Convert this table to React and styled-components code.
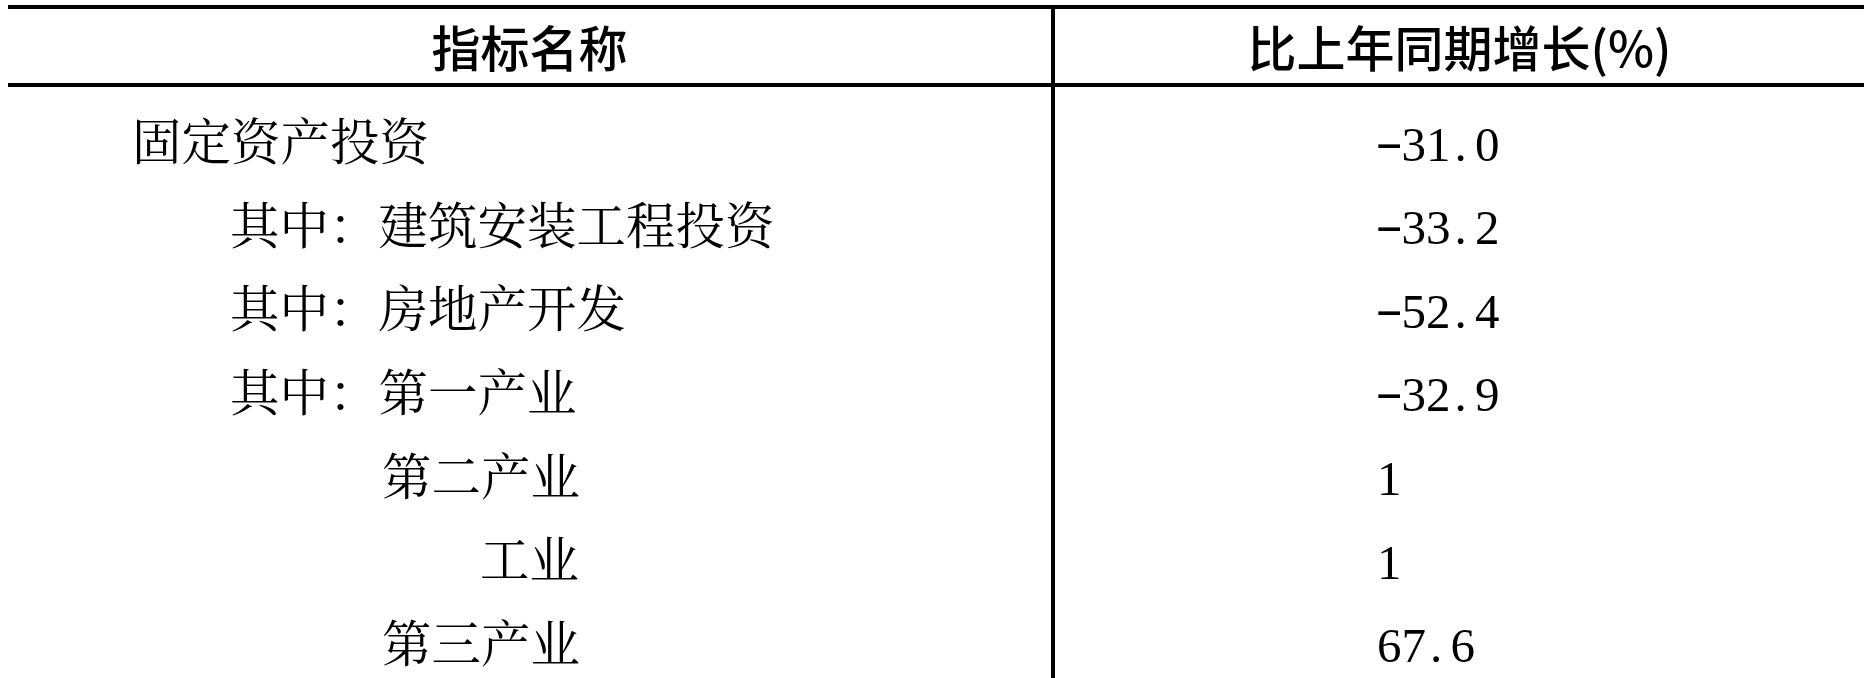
import styled, { createGlobalStyle } from "styled-components";

const GlobalStyle = createGlobalStyle`
  html, body {
    margin: 0;
    padding: 0;
    background: #fff;
    overflow: hidden;
  }
`;

const Page = styled.div`
  padding: 5px 2px 0 8px;
  height: 678px;
  box-sizing: border-box;
`;

const Table = styled.div`
  display: flex;
  width: 1856px;
  height: 100%;
  border-top: 4px solid #000;
  color: #000;
`;

const Column = styled.div`
  display: flex;
  flex-direction: column;
  width: ${(p) => p.$width}px;
  border-left: ${(p) => (p.$divider ? "4px solid #000" : "none")};
  box-sizing: border-box;
`;

const Head = styled.div`
  display: flex;
  align-items: center;
  justify-content: center;
  height: 83px;
  border-bottom: 4px solid #000;
  font-family: "Noto Sans CJK SC", "Noto Sans", sans-serif;
  font-size: 49px;
  font-weight: 500;
`;

const Body = styled.div`
  flex: 1;
  padding-top: 10px;
`;

const NameCell = styled.div`
  display: flex;
  align-items: center;
  height: 83.6px;
  padding-left: ${(p) => p.$indent}px;
  font-family: "Noto Serif CJK SC", "Noto Sans CJK SC", serif;
  font-size: 49.5px;
  white-space: nowrap;
`;

const ValueCell = styled.div`
  display: flex;
  align-items: center;
  height: 83.6px;
  padding: 11px 0 0 322px;
  box-sizing: border-box;
  font-family: "Liberation Serif", serif;
  font-size: 49px;
`;

const Glyph = styled.span`
  display: inline-block;
  width: 0.5em;
  text-align: ${(p) => (p.$kind === "dot" ? "left" : "center")};
  padding-left: ${(p) => (p.$kind === "dot" ? "0.08em" : "0")};
  box-sizing: border-box;
  transform: ${(p) =>
    p.$kind === "minus" ? "scaleX(1.7) translateY(-3px)" : "none"};
`;

const INDENT = [124, 222, 374, 472];

const rows = [
  { name: "固定资产投资", level: 0, value: "-31.0" },
  { name: "其中：建筑安装工程投资", level: 1, value: "-33.2" },
  { name: "其中：房地产开发", level: 1, value: "-52.4" },
  { name: "其中：第一产业", level: 1, value: "-32.9" },
  { name: "第二产业", level: 2, value: "1" },
  { name: "工业", level: 3, value: "1" },
  { name: "第三产业", level: 2, value: "67.6" },
];

function Num({ value }) {
  return (
    <span>
      {value.split("").map((ch, i) => (
        <Glyph
          key={i}
          $kind={ch === "-" ? "minus" : ch === "." ? "dot" : "digit"}
        >
          {ch}
        </Glyph>
      ))}
    </span>
  );
}

export default function App() {
  return (
    <>
      <GlobalStyle />
      <Page>
        <Table>
          <Column $width={1043}>
            <Head>指标名称</Head>
            <Body>
              {rows.map((r) => (
                <NameCell key={r.name + r.value} $indent={INDENT[r.level]}>
                  {r.name}
                </NameCell>
              ))}
            </Body>
          </Column>
          <Column $width={813} $divider>
            <Head>比上年同期增长(%)</Head>
            <Body>
              {rows.map((r) => (
                <ValueCell key={r.name + r.value}>
                  <Num value={r.value} />
                </ValueCell>
              ))}
            </Body>
          </Column>
        </Table>
      </Page>
    </>
  );
}
